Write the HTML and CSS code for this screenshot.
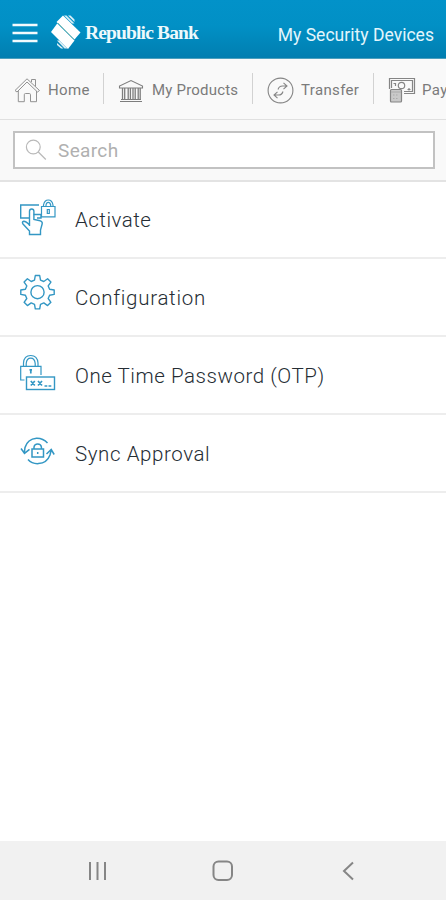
FILE: index.html
```html
<!DOCTYPE html>
<html lang="en">
<head>
<meta charset="utf-8">
<title>My Security Devices</title>
<link rel="stylesheet" href="styles.css">
</head>
<body>
<div class="app">
  <header class="header">
    <svg class="menu" width="26" height="20" viewBox="0 0 26 20" fill="none" stroke="#f2fafd" stroke-width="2.6"><path d="M.5 2h25M.5 10h25M.5 18h25"/></svg>
    <svg class="logo" width="30" height="36" viewBox="0 0 30 36" fill="#fff"><path d="M5.500 8 12 1.500 29.500 18.500 23.500 25.500z"/><path d="M0 18 6.200 9.500 23.500 26.500 17 35z"/><path d="M13 1.500 15.500 1.500 23.500 9.500 21 9.500zM17 1.500h2.500l4 4v2.500zM6 26.500h2.500l8 8h-3zM6 29v2l4 3.500h2.500z" opacity=".85"/><path d="M7 9 23 25.500" stroke="#75b7a8" stroke-width=".9"/></svg>
    <span class="brand">Republic Bank</span>
    <h1 class="title">My Security Devices</h1>
  </header>
  <nav class="tabs">
    <a class="tab home">
      <svg width="27" height="27" viewBox="0 0 27 27" fill="none" stroke="#929292" stroke-width="1"><path d="M1 13.500 13 1.800 25.500 13.500 23.500 15 13 5 3 15zM4.300 14v10.700h6v-7q0-1.200 1.200-1.200h3.800q1.200 0 1.200 1.200v7h6V14M17.500 5V2.500h4v7"/></svg>
      <span>Home</span>
    </a>
    <a class="tab products">
      <svg width="26" height="27" viewBox="0 0 26 27" fill="none" stroke="#7d7d7d" stroke-width="1.100"><path d="M1.500 11v-2L13 3.500 24.500 9v2zM2 24.500h22M3 22.500h20"/><path d="M4.500 11v11M6.700 11v11M10.200 11v11M12.400 11v11M15 11v11M17.200 11v11M20.200 11v11M22.200 11v11" stroke-width="1.300"/></svg>
      <span>My Products</span>
    </a>
    <a class="tab transfer">
      <svg width="27" height="27" viewBox="0 0 27 27" fill="none" stroke="#858585" stroke-width="1.100"><circle cx="13.500" cy="13.500" r="12.400"/><path d="M11 12.500q1-3.500 4.500-3.500H20M16.500 5.800 20 9l-3.500 3.200M16 14.500q-1 3.500-4.500 3.500H7M10.500 14.800 7 18l3.500 3.200"/></svg>
      <span>Transfer</span>
    </a>
    <a class="tab pay">
      <svg width="28" height="27" viewBox="0 0 28 27" fill="none" stroke="#858585" stroke-width="1.200"><path d="M1.500 12V1.500h25v15H16M3.500 11V3.500h21v11H16M5.500 6.500h2v2.500M21 11v2.500M19.500 12.500h3"/><circle cx="13.500" cy="8.500" r="3.200"/><rect x="2.500" y="12.500" width="11" height="12.500" rx="1" fill="#c9c9c9"/><path d="M3 15h10M5 18h1.500M8 18h1.500M5 21.500h1.500M8 21.500h1.500" stroke="#aaa"/></svg>
      <span>Pay</span>
    </a>
  </nav>
  <div class="search">
    <div class="field">
      <svg width="22" height="22" viewBox="0 0 22 22" fill="none" stroke="#b9b9b9" stroke-width="1.200"><circle cx="8.300" cy="8" r="6.900"/><path d="m13.300 13 7.500 7.500"/></svg>
      <span>Search</span>
    </div>
  </div>
  <main class="list">
    <a class="row activate">
      <svg width="38" height="38" viewBox="0 0 38 38" fill="none" stroke="#3397c4" stroke-width="1.400"><path d="M10 19H1.700V6H20M14.500 15.500H22V19h-4"/><path d="M10.500 27V12.200q0-2.200 2.200-2.200t2.200 2.200v8.300l6.300 1.300q2.500.7 2 3l-1.700 6.200v4.500H10.500V32L4 25q-1.500-2.300.8-2.800 2.400 0 5.700 3.800"/><path d="M22.500 7.500h13.500v10.300H22.500zM24.500 7.500V6Q25.500 1 29.300 1T34 6v1.500M27 7.500V6q.5-2.600 2.300-2.600T31.700 6v1.500M28.300 10.500h2v4h-2z" stroke-width="1.200"/></svg>
      <span>Activate</span>
    </a>
    <a class="row config">
      <svg width="38" height="38" viewBox="0 0 38 38" fill="none" stroke="#3397c4" stroke-width="1.400" stroke-linejoin="round"><path d="M16.300 1.500h4.400l.8 4.600 3.300 1.400 3.800-2.700 3.300 3.300-2.700 3.800 1.400 3.300 4.600.8v4.400l-4.600.8-1.400 3.300 2.700 3.800-3.300 3.300-3.800-2.700-3.300 1.400-.8 4.600h-4.400l-.8-4.600-3.300-1.400-3.800 2.700-3.300-3.300 2.700-3.800-1.400-3.300-4.600-.8v-4.400l4.600-.8 1.400-3.300-2.700-3.800 3.300-3.300 3.800 2.700 3.300-1.400z"/><circle cx="18.500" cy="18.200" r="6.600"/></svg>
      <span>Configuration</span>
    </a>
    <a class="row otp">
      <svg width="38" height="38" viewBox="0 0 38 38" fill="none" stroke="#3397c4" stroke-width="1.400"><path d="M5.500 26H1.700V12.300H22V21M4.500 12V9Q5 1.500 11.700 1.500T19 9v3M7.200 12V9.500Q7.700 4.200 11.700 4.200t4.500 5.300V12" stroke-width="1.200"/><path d="M11.800 15v4.500M10.500 15.800h2.500" stroke-width="1.700"/><rect x="7.500" y="23" width="28" height="12.500"/><path d="m11.800 27 4 4.500m0-4.500-4 4.500M19 27l4 4.500m0-4.500-4 4.500" stroke-width="1.700"/><path d="M25.500 32h2.800M29.500 32h2.800"/></svg>
      <span>One Time Password (OTP)</span>
    </a>
    <a class="row sync">
      <svg width="38" height="38" viewBox="0 0 38 38" fill="none" stroke="#3397c4" stroke-width="1.500"><path d="M28.500 10Q24 5 17.500 5.200 8.500 6 6 14.500L5.300 20M2 15.500l3.500 4.800 5-4M9 26.500Q13 31 19.500 30.600 28 30 31 22l1.200-5M27.500 21l4.700-4.500 3 5"/><rect x="13" y="16" width="11.500" height="8"/><path d="M15 16v-2q.5-3 3.700-3t3.700 3v2M18.700 19v2"/></svg>
      <span>Sync Approval</span>
    </a>
  </main>
  <footer class="system">
    <svg width="20" height="20" viewBox="0 0 20 20" fill="none" stroke="#868686" stroke-width="2"><path d="M2 1v18M9.500 1v18M17 1v18"/></svg>
    <svg width="22" height="22" viewBox="0 0 22 22" fill="none" stroke="#868686" stroke-width="2"><rect x="1.500" y="1.500" width="18.500" height="18.500" rx="5"/></svg>
    <svg width="14" height="20" viewBox="0 0 14 20" fill="none" stroke="#868686" stroke-width="2"><path d="M12 1.500 3 10l9 8.500"/></svg>
  </footer>
</div>
</body>
</html>
```
FILE: styles.css
```css
* { box-sizing: border-box; }
body { margin: 0; background: #fff; font-family: Roboto, "Liberation Sans", sans-serif; }
svg { display: block; flex: none; }
span, h1 { white-space: nowrap; }
.app { width: 446px; height: 900px; display: flex; flex-direction: column; overflow: hidden; }
.header { height: 59px; flex: none; display: flex; align-items: flex-start; padding: 0 12px; background: linear-gradient(#0292c9, #0190c5 45%, #017eb0); border-bottom: 1px solid #4b9fbd; }
.menu { margin-top: 23px; }
.logo { margin: 14px 0 0 13px; }
.brand { margin: 21px 0 0 4px; font: bold 19.500px/24px "Liberation Serif", serif; letter-spacing: -0.850px; color: #eef9fc; }
.title { margin: 23px 0 0 auto; font-size: 17.500px; line-height: 24px; font-weight: 400; letter-spacing: 0.030px; color: #e3f6fc; }
.tabs { height: 61px; flex: none; display: flex; overflow: hidden; padding-top: 14px; background: #f9f9f9; border-bottom: 1px solid #e0e0e0; }
.tab { height: 31px; flex: none; display: flex; align-items: center; border-right: 1px solid #d2d2d2; padding-top: 1px; color: #7b7b7b; font-size: 15px; letter-spacing: 0.350px; }
.tab svg { margin-top: 2px; }
.tab span { margin-top: 1px; }
.home { width: 104px; padding-left: 14px; gap: 7px; }
.products { width: 149px; padding-left: 14px; gap: 8px; letter-spacing: 0.200px; }
.transfer { width: 121px; padding-left: 14px; gap: 7px; }
.pay { width: 100px; padding-left: 14px; gap: 6px; }
.search { height: 62px; flex: none; padding: 11px 11px 0 13px; background: #f9f9f9; border-bottom: 2px solid #e3e3e3; }
.field { height: 38px; display: flex; align-items: center; gap: 11px; padding-left: 10px; border: 2px solid #c2c2c2; background: #fff; color: #b0b0b0; font-size: 19px; letter-spacing: 0.350px; }
.field span { margin-top: 1px; }
.list { flex: 1; margin-top: -1px; }
.row { height: 78px; display: flex; align-items: center; gap: 18px; padding-left: 19px; border-bottom: 2px solid #ededed; color: #252d34; font-size: 20.500px; font-weight: 300; }
.row svg { margin-top: -8px; }
.row span { margin-top: 2px; }
.row.activate svg { margin-top: -3px; }
.row.otp svg { margin-top: -4px; }
.row.sync svg { margin-top: -3px; }
.activate { letter-spacing: 0.480px; }
.config { letter-spacing: 0.720px; }
.otp { letter-spacing: 0.550px; }
.sync { letter-spacing: 0.580px; }
.system { height: 59px; flex: none; display: flex; align-items: center; justify-content: space-between; padding: 0 91px 0 88px; background: #f1f1f1; }
.system svg:nth-child(2) { margin-right: 3px; }
```
